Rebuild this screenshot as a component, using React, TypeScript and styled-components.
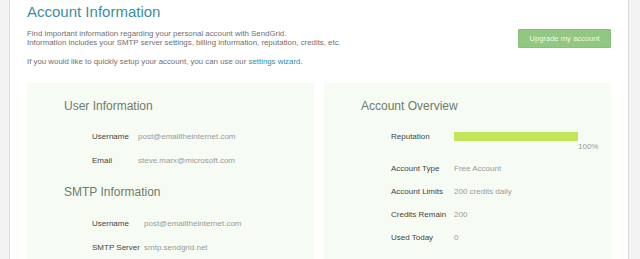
import React from "react";
import styled, { createGlobalStyle } from "styled-components";

const Global = createGlobalStyle`
  html, body { margin: 0; padding: 0; background: #fff; }
  body { font-family: "Liberation Sans", Arial, sans-serif; }
`;

const Page = styled.div`
  display: flex;
  height: 259px;
  overflow: hidden;
`;

const Gutter = styled.div<{ $side: "left" | "right" }>`
  flex: 0 0 ${(p) => (p.$side === "left" ? "9px" : "11px")};
  background: #f3f3f3;
  ${(p) => (p.$side === "left" ? "border-right" : "border-left")}: 1px solid #dedede;
`;

const Main = styled.main`
  flex: 1;
  padding: 0 17px;
  background: #fff;
`;

const Header = styled.header`
  display: flex;
  justify-content: space-between;
  align-items: flex-start;
`;

const Intro = styled.div`
  display: flex;
  flex-direction: column;
`;

const Title = styled.h1`
  margin: 3px 0 0;
  font-size: 15px;
  line-height: 18px;
  font-weight: normal;
  color: #3b8fa1;
`;

const Text = styled.p`
  margin: 8px 0 0;
  font-size: 7.85px;
  line-height: 9px;
  color: #707070;
  & + & { margin-top: 10px; }
`;

const Link = styled.a`
  color: #2c8eaa;
  text-decoration: none;
`;

const Button = styled.button`
  margin-top: 29px;
  width: 93px;
  height: 19px;
  padding: 0;
  border: 1px solid #87c178;
  background: #90c882;
  color: #eef8ea;
  font-family: inherit;
  font-size: 7.6px;
  border-radius: 1px;
`;

const Panels = styled.div`
  margin-top: 17px;
  display: grid;
  grid-template-columns: 1fr 1fr;
  gap: 10px;
`;

const Panel = styled.section`
  background: #f6fcf3;
  padding: 16px 0 20px 37px;
  height: 200px;
`;

const Heading = styled.h2<{ $spaced?: boolean }>`
  margin: ${(p) => (p.$spaced ? "13px" : "0")} 0 ${(p) => (p.$spaced ? "12px" : "11px")};
  font-size: 12px;
  line-height: 14px;
  font-weight: normal;
  color: #6f7b69;
`;

const Rows = styled.div<{ $label: number; $indent: number; $row: number }>`
  display: grid;
  grid-template-columns: ${(p) => p.$label}px auto;
  grid-auto-rows: ${(p) => p.$row}px;
  padding-left: ${(p) => p.$indent}px;
  align-items: center;
  font-size: 8px;
`;

const Label = styled.span`
  color: #444;
  white-space: nowrap;
`;

const Value = styled.span`
  color: #9a9a9a;
  white-space: nowrap;
`;

const RepLine = styled.div`
  display: flex;
  align-items: flex-start;
  height: 33px;
  padding: 8px 0 0 30px;
  box-sizing: border-box;
  font-size: 8px;
`;

const RepLabel = styled(Label)`
  width: 63px;
`;

const RepBlock = styled.div`
  display: flex;
  flex-direction: column;
`;

const Bar = styled.div`
  width: 124px;
  height: 9px;
  background: #c3e55a;
`;

const Percent = styled.span`
  padding-left: 124px;
  margin-top: 1px;
  color: #9a9a9a;
`;

export default function App() {
  return (
    <>
      <Global />
      <Page>
        <Gutter $side="left" />
        <Main>
          <Header>
            <Intro>
              <Title>Account Information</Title>
              <Text>
                Find important information regarding your personal account with SendGrid.
                <br />
                Information includes your SMTP server settings, billing information, reputation, credits, etc.
              </Text>
              <Text>
                If you would like to quickly setup your account, you can use our{" "}
                <Link href="#">settings wizard</Link>.
              </Text>
            </Intro>
            <Button>Upgrade my account</Button>
          </Header>
          <Panels>
            <Panel>
              <Heading>User Information</Heading>
              <Rows $label={46} $indent={28} $row={24}>
                <Label>Username</Label>
                <Value>post@emailtheinternet.com</Value>
                <Label>Email</Label>
                <Value>steve.marx@microsoft.com</Value>
              </Rows>
              <Heading $spaced>SMTP Information</Heading>
              <Rows $label={52} $indent={28} $row={24}>
                <Label>Username</Label>
                <Value>post@emailtheinternet.com</Value>
                <Label>SMTP Server</Label>
                <Value>smtp.sendgrid.net</Value>
              </Rows>
            </Panel>
            <Panel>
              <Heading>Account Overview</Heading>
              <RepLine>
                <RepLabel>Reputation</RepLabel>
                <RepBlock>
                  <Bar />
                  <Percent>100%</Percent>
                </RepBlock>
              </RepLine>
              <Rows $label={63} $indent={30} $row={23}>
                <Label>Account Type</Label>
                <Value>Free Account</Value>
                <Label>Account Limits</Label>
                <Value>200 credits daily</Value>
                <Label>Credits Remain</Label>
                <Value>200</Value>
                <Label>Used Today</Label>
                <Value>0</Value>
              </Rows>
            </Panel>
          </Panels>
        </Main>
        <Gutter $side="right" />
      </Page>
    </>
  );
}
